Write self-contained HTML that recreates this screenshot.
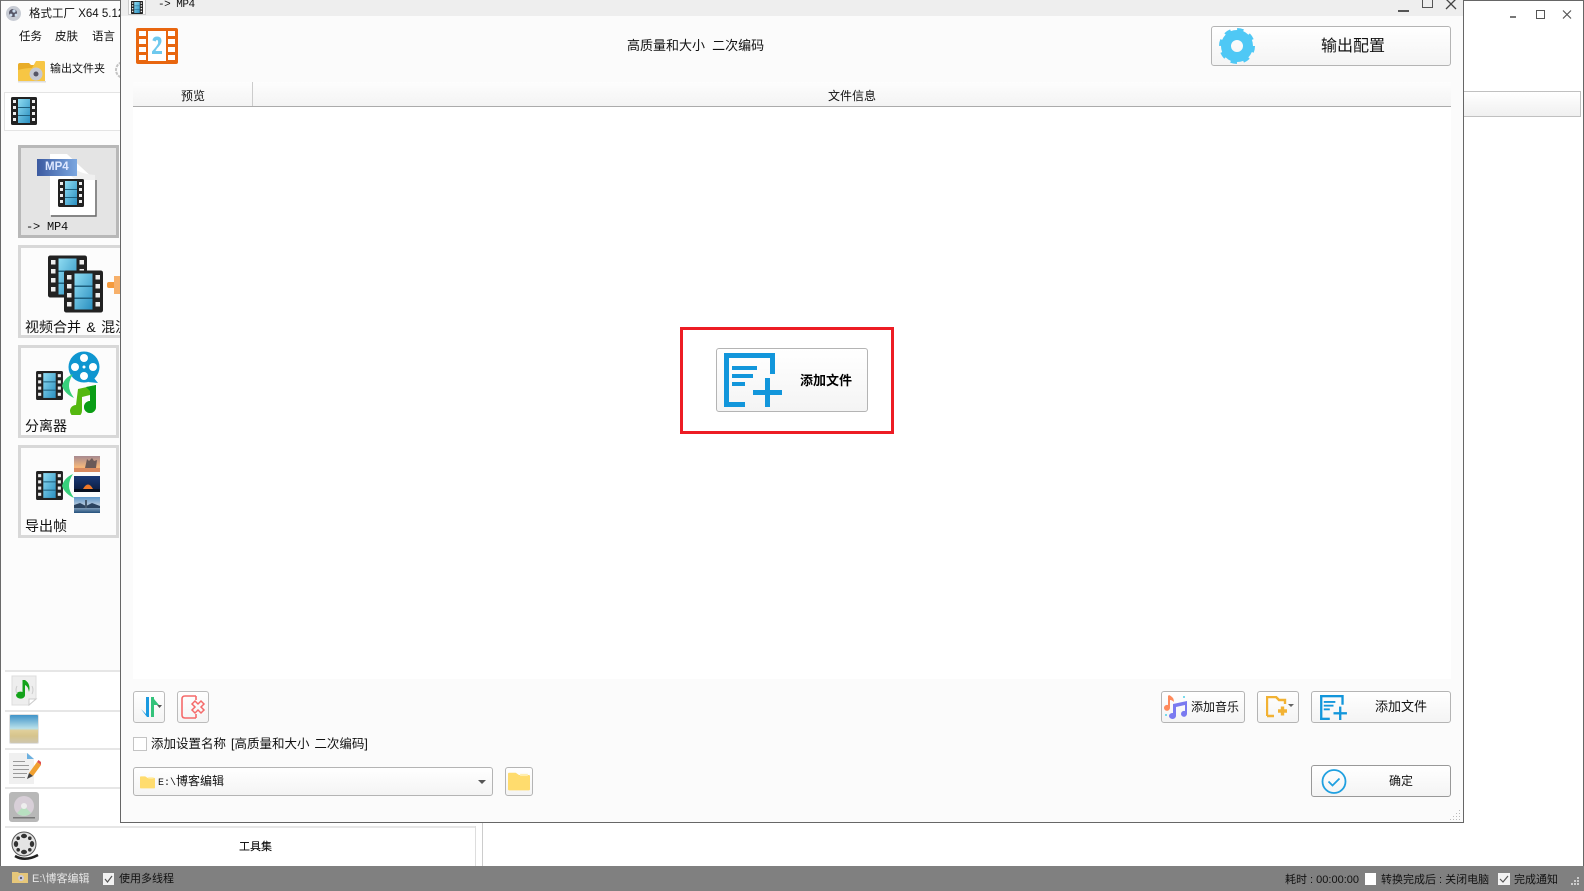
<!DOCTYPE html>
<html lang="zh"><head><meta charset="utf-8"><title>格式工厂</title>
<style>
html,body{margin:0;padding:0}
body{width:1584px;height:891px;position:relative;overflow:hidden;background:#fff;font-family:"Liberation Sans","WenQuanYi Zen Hei","Noto Sans CJK SC",sans-serif;font-size:12px;color:#111}
div,span,svg{position:absolute;box-sizing:border-box}
.t{white-space:nowrap;line-height:16px;height:16px}
.btn{border:1px solid #b4b4b4;border-radius:3px;background:linear-gradient(#fff,#f4f4f4)}
.card{left:18px;width:101px;height:93px;border:3px solid #d8d8d8;background:#fcfcfc}
.sep{left:5px;width:115px;height:2px;background:#e6e6e6}
</style></head>
<body>
<svg width="0" height="0" style="left:0;top:0">
<defs>
<linearGradient id="fb" x1="0" y1="0" x2="1" y2="1"><stop offset="0" stop-color="#8fdcf2"/><stop offset="1" stop-color="#2a8fc0"/></linearGradient>
<symbol id="film" viewBox="0 0 26 28">
<rect width="26" height="28" rx="1.5" fill="#222"/>
<g fill="#eee"><rect x="2" y="3" width="3" height="3"/><rect x="2" y="9" width="3" height="3"/><rect x="2" y="15" width="3" height="3"/><rect x="2" y="21" width="3" height="3"/><rect x="21" y="3" width="3" height="3"/><rect x="21" y="9" width="3" height="3"/><rect x="21" y="15" width="3" height="3"/><rect x="21" y="21" width="3" height="3"/></g>
<rect x="7" y="2" width="12" height="24" fill="url(#fb)"/>
<rect x="7" y="10" width="12" height="1" fill="#1d5f7e"/><rect x="7" y="18" width="12" height="1" fill="#1d5f7e"/>
</symbol>
<symbol id="addf" viewBox="0 0 58 54">
<g fill="#1296db"><rect x="0" y="0" width="50" height="5"/><rect x="0" y="0" width="5" height="54"/><rect x="0" y="49" width="21" height="5"/><rect x="46" y="0" width="5" height="21"/><rect x="8" y="13" width="25" height="4"/><rect x="8" y="21" width="21" height="4"/><rect x="8" y="29" width="13" height="4"/><rect x="29" y="37" width="29" height="5"/><rect x="41" y="25" width="5" height="29"/></g>
</symbol>
<symbol id="fold" viewBox="0 0 20 17">
<path d="M0 2 a1 1 0 0 1 1-1 H7 L10 3 H19 a1 1 0 0 1 1 1 V16 a1 1 0 0 1-1 1 H1 a1 1 0 0 1-1-1Z" fill="#ffdc6e"/>
<rect x="11" y="2" width="7" height="2" fill="#ffeeb0"/>
</symbol>
</defs>
</svg>

<!-- main window -->
<div style="left:0;top:0;width:1px;height:866px;background:#6a6a6a"></div>
<div style="left:1px;top:0;width:119px;height:866px;background:#fcfcfc"></div>
<div style="left:1px;top:0;width:119px;height:1px;background:#777"></div>
<div style="left:1px;top:670px;width:119px;height:196px;background:#fff"></div>
<svg style="left:5px;top:5px" width="17" height="17" viewBox="0 0 17 17"><circle cx="8.5" cy="8.5" r="7.5" fill="#c8ccd4"/><circle cx="8" cy="8" r="4" fill="#556"/><circle cx="9" cy="6" r="1.6" fill="#cde"/><circle cx="6" cy="10" r="1.4" fill="#cde"/><circle cx="11" cy="10" r="1.4" fill="#cde"/></svg>
<div style="left:2px;top:0;width:118px;height:30px;overflow:hidden"><span class="t" style="left:27px;top:6px;font-size:11.5px">格式工厂 X64 5.12</span></div>
<span class="t" style="left:19px;top:29px;font-size:11.5px">任务</span>
<span class="t" style="left:55px;top:29px;font-size:11.5px">皮肤</span>
<span class="t" style="left:92px;top:29px;font-size:11.5px">语言</span>
<svg style="left:17px;top:59px" width="29" height="24" viewBox="0 0 29 24"><path d="M1 6 Q1 4 3 4 H12 L14 6 H27 Q28 6 28 8 V22 H2 Q1 22 1 21Z" fill="#e9ad28"/><path d="M1 11 Q8 9 15 9 L19 2 H27 Q28 2 28 4 V22 H2 Q1 22 1 21Z" fill="#f7c644"/><circle cx="19" cy="15" r="6.5" fill="#c6c9d2"/><circle cx="19" cy="15" r="2.5" fill="#556"/><rect x="1" y="22" width="28" height="1.5" fill="#ddd"/></svg>
<span class="t" style="left:50px;top:61px;font-size:11px">输出文件夹</span>
<svg style="left:114px;top:60px" width="6" height="20" viewBox="0 0 6 20"><circle cx="10" cy="10" r="8" fill="none" stroke="#c4c4c4" stroke-width="2" stroke-dasharray="3 1"/></svg>
<div style="left:4px;top:92px;width:116px;height:39px;border:1px solid #e4e4e4;border-right:0;background:#fff"></div>
<svg style="left:11px;top:97px" width="26" height="28"><use href="#film"/></svg>

<!-- cards -->
<div class="card" style="top:145px;background:#e4e4e4;border-color:#b8b8b8"></div>
<svg style="left:37px;top:153px" width="60" height="64" viewBox="0 0 60 64"><path d="M13 1 H30 L58 27 V62 H13Z" fill="#fff"/><path d="M30 1 Q31 20 58 22 L58 27 H44 Q34 27 32 18 Z" fill="#f0f0f0"/><path d="M14 63 H59 V27" fill="none" stroke="#666" stroke-width="1.4"/></svg>
<div style="left:37px;top:159px;width:40px;height:17px;background:linear-gradient(90deg,#3c5aa0,#7ba7e0)"></div>
<span class="t" style="left:45px;top:159px;font-size:11.5px;font-weight:bold;color:#dfe8ff">MP4</span>
<svg style="left:58px;top:179px" width="26" height="28"><use href="#film"/></svg>
<span class="t" style="left:26px;top:219px;font-family:'Liberation Mono',monospace;font-size:12px;letter-spacing:-.2px">-&gt; MP4</span>

<div class="card" style="top:245px;width:102px;border-right:0"></div>
<svg style="left:48px;top:255px" width="39" height="43"><use href="#film"/></svg>
<svg style="left:64px;top:270px" width="39" height="43"><use href="#film"/></svg>
<svg style="left:107px;top:276px" width="13" height="18" viewBox="0 0 13 18"><rect x="0" y="6" width="13" height="6" rx="2" fill="#f59a3c"/><rect x="7" y="0" width="6" height="18" fill="#f7b06a"/></svg>
<div style="left:18px;top:316px;width:102px;height:20px;overflow:hidden"><span class="t" style="left:7px;top:3px;font-size:14px;word-spacing:1.5px">视频合并 &amp; 混流</span></div>

<div class="card" style="top:345px"></div>
<svg style="left:36px;top:371px" width="27" height="29"><use href="#film"/></svg>
<svg style="left:68px;top:351px" width="34" height="64" viewBox="0 0 34 64"><circle cx="16" cy="16" r="15.5" fill="#0f96d0"/><g fill="#fff"><circle cx="16" cy="7" r="4"/><circle cx="16" cy="25" r="4"/><circle cx="7" cy="16" r="4"/><circle cx="25" cy="16" r="4"/><circle cx="16" cy="16" r="1.5"/></g><path d="M20 31 L30 32 L26 27Z" fill="#0f96d0"/><path d="M10 38 L28 34 V56 A6 6 0 1 1 22 50 V44 L14 46 V60 A6 6 0 1 1 8 54 Z" fill="#55b810"/><path d="M18 36 L28 34 V56 A6 6 0 1 1 22 50 V40 Z" fill="#0a9d16"/></svg>
<svg style="left:61px;top:373px" width="14" height="26" viewBox="0 0 14 26"><path d="M12 1 Q3 5 1 13 Q4 21 13 25 Q8 18 8 13 Q8 7 12 1Z" fill="#37d07c"/></svg>
<span class="t" style="left:25px;top:418px;font-size:14px">分离器</span>

<div class="card" style="top:445px"></div>
<svg style="left:36px;top:471px" width="27" height="29"><use href="#film"/></svg>
<svg style="left:61px;top:473px" width="14" height="26" viewBox="0 0 14 26"><path d="M12 1 Q3 5 1 13 Q4 21 13 25 Q8 18 8 13 Q8 7 12 1Z" fill="#37d07c"/></svg>
<svg style="left:74px;top:456px" width="26" height="16" viewBox="0 0 26 16"><defs><linearGradient id="s1" x1="0" y1="0" x2="0" y2="1"><stop offset="0" stop-color="#a88a90"/><stop offset=".7" stop-color="#f6b87c"/><stop offset="1" stop-color="#e88c50"/></linearGradient></defs><rect width="26" height="16" fill="url(#s1)"/><path d="M11 12 L13 3 L15 5 L18 2 L20 5 L23 4 L22 12Z" fill="#6a5a58"/><rect y="12" width="26" height="4" fill="#d88a60"/></svg>
<svg style="left:74px;top:476px" width="26" height="16" viewBox="0 0 26 16"><defs><linearGradient id="s2" x1="0" y1="0" x2="0" y2="1"><stop offset="0" stop-color="#1a3a78"/><stop offset="1" stop-color="#0c1a3c"/></linearGradient></defs><rect width="26" height="16" fill="url(#s2)"/><path d="M9 13 Q14 4 19 13Z" fill="#f07828"/><rect y="13" width="26" height="3" fill="#081020"/></svg>
<svg style="left:74px;top:497px" width="26" height="16" viewBox="0 0 26 16"><defs><linearGradient id="s3" x1="0" y1="0" x2="0" y2="1"><stop offset="0" stop-color="#5e96c8"/><stop offset=".5" stop-color="#b4c8dc"/><stop offset="1" stop-color="#24507c"/></linearGradient></defs><rect width="26" height="16" fill="url(#s3)"/><path d="M0 8 L6 6 L12 9 L18 6 L26 9 V11 H0Z" fill="#2c4460"/><rect x="11" y="3" width="2" height="8" fill="#44586c"/></svg>
<span class="t" style="left:25px;top:518px;font-size:14px">导出帧</span>

<!-- lower list -->
<div class="sep" style="top:670px"></div>
<div class="sep" style="top:710px"></div>
<div class="sep" style="top:748px"></div>
<div class="sep" style="top:787px"></div>
<div class="sep" style="top:826px;width:470px"></div>
<svg style="left:11px;top:675px" width="27" height="31" viewBox="0 0 27 31"><path d="M1 1 H25 V24 L18 30 H1Z" fill="#eee" stroke="#ddd"/><path d="M25 24 H18 V30Z" fill="#fff" stroke="#ccc"/><path d="M14 5 V20 A4.5 3.5 0 1 1 11.5 17 V5 Z" fill="#13a31a"/><path d="M14 5 Q20 9 18 17 Q17 11 14 10Z" fill="#13a31a"/><path d="M6 11 Q4 15 6 19 M21 11 Q23 15 21 19" fill="none" stroke="#ccc"/></svg>
<div style="left:9px;top:714px;width:30px;height:30px;border-radius:2px;background:linear-gradient(#3f93c8,#b8e0ea 48%,#e0cf9a 55%,#d6c48c 75%,#cfc7b0);border:1px solid #e2e2e2"></div>
<svg style="left:8px;top:752px" width="33" height="33" viewBox="0 0 33 33"><path d="M1 1 H20 L26 7 V32 H1Z" fill="#f0f0f0"/><path d="M19 1 L26 7 H19Z" fill="#6bb0e0"/><g fill="#999"><rect x="5" y="9" width="12" height="1"/><rect x="5" y="13" width="16" height="1"/><rect x="5" y="17" width="16" height="1"/><rect x="5" y="21" width="14" height="1"/><rect x="5" y="25" width="12" height="1"/></g><path d="M21 21 L29 10 L33 13 L25 24 Z" fill="#f0a030"/><path d="M29 10 L30.5 8 L33 10 L33 13Z" fill="#e05050"/><path d="M21 21 L25 24 L19 27Z" fill="#444"/></svg>
<div style="left:9px;top:792px;width:30px;height:30px;border-radius:3px;background:#b8b8b8"></div>
<svg style="left:12px;top:795px" width="24" height="24" viewBox="0 0 24 24"><circle cx="12" cy="11" r="10" fill="#d8cfd8"/><path d="M12 11 L5 18 A10 10 0 0 0 19 18Z" fill="#b8e0c0"/><circle cx="12" cy="11" r="3" fill="#eee"/><rect x="1" y="22" width="22" height="1.5" fill="#777"/></svg>
<svg style="left:11px;top:831px" width="29" height="31" viewBox="0 0 29 31"><circle cx="13" cy="13" r="12" fill="#e4e4e4" stroke="#555" stroke-width="1"/><g fill="#333"><ellipse cx="13" cy="5" rx="3" ry="2.2"/><ellipse cx="13" cy="21" rx="3" ry="2.2"/><ellipse cx="5" cy="13" rx="2.2" ry="3"/><ellipse cx="21" cy="13" rx="2.2" ry="3"/><circle cx="7.2" cy="7.2" r="1.8"/><circle cx="18.8" cy="7.2" r="1.8"/><circle cx="7.2" cy="18.8" r="1.8"/><circle cx="18.8" cy="18.8" r="1.8"/></g><path d="M4 25 Q14 31 27 24" fill="none" stroke="#222" stroke-width="2.5"/></svg>
<span class="t" style="left:239px;top:839px;font-size:11px;text-shadow:0 0 0 #333">工具集</span>
<div style="left:475px;top:826px;width:1px;height:40px;background:#ddd"></div>
<div style="left:482px;top:822px;width:1px;height:44px;background:#ccc"></div>

<!-- right window -->
<div style="left:1463px;top:0;width:121px;height:866px;background:#fff;border-top:1px solid #666;border-right:1px solid #666"></div>
<div style="left:1510px;top:16px;width:6px;height:2px;background:#777"></div>
<div style="left:1536px;top:10px;width:9px;height:9px;border:1px solid #555"></div>
<svg style="left:1562px;top:10px" width="10" height="9"><path d="M1 .5 L9 8.5 M9 .5 L1 8.5" stroke="#555" stroke-width="1.2"/></svg>
<div style="left:1464px;top:91px;width:117px;height:26px;border:1px solid #c0c0c0;border-left:0;background:linear-gradient(#fff,#f0f0f0)"></div>

<!-- dialog -->
<div style="left:120px;top:0;width:1344px;height:823px;background:#fbfbfb;border-left:1px solid #666;border-right:1px solid #666;border-bottom:1px solid #666"></div>
<div style="left:121px;top:0;width:1342px;height:16px;background:#eee"></div>
<div style="left:128px;top:0;width:18px;height:15px;background:#fafafa;border:1px solid #ccc;border-top:0"></div>
<svg style="left:131px;top:1px" width="12" height="13"><use href="#film"/></svg>
<span class="t" style="left:158px;top:-3px;font-family:'Liberation Mono',monospace;font-size:11px;letter-spacing:-.5px">-&gt; MP4</span>
<div style="left:1398px;top:10px;width:11px;height:1.5px;background:#555"></div>
<div style="left:1422px;top:-1px;width:11px;height:9px;border:1.5px solid #555"></div>
<svg style="left:1445px;top:-1px" width="12" height="11"><path d="M1 0 L11 10 M11 0 L1 10" stroke="#444" stroke-width="1.3"/></svg>

<svg style="left:136px;top:28px" width="42" height="36" viewBox="0 0 42 36"><rect width="42" height="36" rx="2" fill="#e8660f"/><g fill="#fff"><rect x="3" y="3" width="7" height="5"/><rect x="3" y="11" width="7" height="5"/><rect x="3" y="19" width="7" height="5"/><rect x="3" y="27" width="7" height="5"/><rect x="32" y="3" width="7" height="5"/><rect x="32" y="11" width="7" height="5"/><rect x="32" y="19" width="7" height="5"/><rect x="32" y="27" width="7" height="5"/><rect x="12" y="3" width="18" height="30"/></g><path d="M16.5 12.5 Q17 8.5 21 8.5 Q25.5 8.5 25.5 13 Q25.5 16 21 20.5 L19.5 23 H26 V26 H16 V23.5 Q21 18 22 15.5 Q22.5 12 21 12 Q20 12 19.8 13.5 Z" fill="#6fc9ee"/></svg>
<span class="t" style="left:627px;top:38px;font-size:13px;word-spacing:3.5px">高质量和大小 二次编码</span>

<div class="btn" style="left:1211px;top:26px;width:240px;height:40px"></div>
<svg style="left:1217px;top:27px" width="40" height="38" viewBox="0 0 40 38"><circle cx="20" cy="19" r="11" fill="none" stroke="#4fc8f5" stroke-width="10"/><circle cx="20" cy="19" r="15.5" fill="none" stroke="#4fc8f5" stroke-width="5" stroke-dasharray="6 6.17"/></svg>
<span class="t" style="left:1321px;top:38px;font-size:16px;line-height:18px;height:18px">输出配置</span>

<div style="left:133px;top:82px;width:1318px;height:25px;background:linear-gradient(#fdfdfd,#f4f4f4);border-bottom:1px solid #ababab"></div>
<div style="left:252px;top:82px;width:1px;height:24px;background:#ccc"></div>
<span class="t" style="left:181px;top:87.5px">预览</span>
<span class="t" style="left:828px;top:87.5px">文件信息</span>
<div style="left:133px;top:107px;width:1318px;height:572px;background:#fff"></div>

<div style="left:680px;top:327px;width:214px;height:107px;border:3px solid #ed1c24"></div>
<div class="btn" style="left:716px;top:348px;width:152px;height:64px"></div>
<svg style="left:724px;top:353px" width="58" height="54"><use href="#addf"/></svg>
<span class="t" style="left:800px;top:373px;font-size:13px;font-weight:bold;color:#000">添加文件</span>

<div class="btn" style="left:133px;top:691px;width:32px;height:32px;border-color:#bbb"></div>
<svg style="left:140px;top:696px" width="22" height="22" viewBox="0 0 22 22"><path d="M1 13 L6 18 V1 H9 V21 H7 Z" fill="#1a9ae0"/><path d="M11 1 H14 V21 H11Z" fill="#33c27a"/><path d="M14 3 L19 9 H14Z" fill="#33c27a"/><path d="M17 9 H22 L19.5 12Z" fill="#555"/></svg>
<div class="btn" style="left:177px;top:691px;width:32px;height:32px;border-color:#bbb"></div>
<svg style="left:181px;top:695px" width="25" height="24" viewBox="0 0 25 24" fill="none" stroke="#f56a6a" stroke-width="1.6"><path d="M15 1 H4 Q1 1 1 4 V20 Q1 23 4 23 H15"/><path d="M15 1 V5 M15 19 V23"/><path d="M11 9 L14 6 L17 9 L20 6 L23 9 L20 12 L23 15 L20 18 L17 15 L14 18 L11 15 L14 12Z" stroke-width="1.5"/></svg>

<div style="left:133px;top:737px;width:14px;height:14px;background:#fff;border:1px solid #c4c4c4"></div>
<span class="t" style="left:151px;top:736px;font-size:12.5px;word-spacing:1.5px">添加设置名称 [高质量和大小 二次编码]</span>

<div class="btn" style="left:133px;top:767px;width:360px;height:29px"></div>
<svg style="left:140px;top:775px" width="15" height="14"><use href="#fold"/></svg>
<span class="t" style="left:158px;top:773px"><span style="position:static;font-family:'Liberation Mono',monospace;font-size:10px">E:\</span>博客编辑</span>
<div style="left:478px;top:780px;border-left:4px solid transparent;border-right:4px solid transparent;border-top:4px solid #555"></div>
<div class="btn" style="left:505px;top:767px;width:28px;height:29px"></div>
<svg style="left:508px;top:771px" width="22" height="20"><use href="#fold"/></svg>

<div class="btn" style="left:1161px;top:691px;width:84px;height:32px"></div>
<svg style="left:1164px;top:694px" width="26" height="26" viewBox="0 0 26 26"><path d="M4 2 L5 1 Q10 3 10 8 Q8 6 6 6 V14 A3 3 0 1 1 4 11Z" fill="#ff8a5c"/><path d="M9 10 L23 7 V20 A3 3 0 1 1 21 17 V11 L12 13 V22 A3.5 3 0 1 1 9 19Z" fill="#7a7af0"/><circle cx="20" cy="3" r="1" fill="#4fd0e8"/><circle cx="2" cy="21" r="1" fill="#4fd0e8"/></svg>
<span class="t" style="left:1191px;top:699px;">添加音乐</span>

<div class="btn" style="left:1257px;top:691px;width:42px;height:32px"></div>
<svg style="left:1266px;top:696px" width="28" height="22" viewBox="0 0 28 22"><path d="M1 20 V1 H10 L13 4 H19 V8 M1 20 H8" fill="none" stroke="#f2b233" stroke-width="2.4"/><path d="M12 15 H21 M16.5 10.5 V19.5" stroke="#f2b233" stroke-width="3.4"/><path d="M22 8 H28 L25 11Z" fill="#666"/></svg>

<div class="btn" style="left:1311px;top:691px;width:140px;height:32px"></div>
<svg style="left:1319px;top:695px" width="29" height="25"><use href="#addf"/></svg>
<span class="t" style="left:1375px;top:699px;font-size:13px">添加文件</span>

<div class="btn" style="left:1311px;top:765px;width:140px;height:32px;border-color:#999"></div>
<svg style="left:1321px;top:769px" width="26" height="25" viewBox="0 0 26 25" fill="none" stroke="#20a0e0"><circle cx="13" cy="12.5" r="11.5" stroke-width="1.8"/><path d="M7.5 12.5 L11.5 16.5 L18.5 9.5" stroke-width="1.8"/></svg>
<span class="t" style="left:1389px;top:773px;">确定</span>

<svg style="left:1450px;top:810px" width="12" height="11"><g fill="#bbb"><rect x="9" y="0" width="1" height="1"/><rect x="6" y="3" width="1" height="1"/><rect x="9" y="3" width="1" height="1"/><rect x="3" y="6" width="1" height="1"/><rect x="6" y="6" width="1" height="1"/><rect x="9" y="6" width="1" height="1"/><rect x="0" y="9" width="1" height="1"/><rect x="3" y="9" width="1" height="1"/><rect x="6" y="9" width="1" height="1"/><rect x="9" y="9" width="1" height="1"/></g></svg>

<!-- status bar -->
<div style="left:0;top:866px;width:1584px;height:25px;background:#808080"></div>
<svg style="left:12px;top:870px" width="16" height="14" viewBox="0 0 16 14"><path d="M0 2 H6 L7 3 H16 V13 H0Z" fill="#e6c77a"/><circle cx="9" cy="8" r="3" fill="#ccd"/><circle cx="9" cy="8" r="1.1" fill="#556"/></svg>
<span class="t" style="left:32px;top:871px;color:#e6e6e6;font-size:11px">E:\博客编辑</span>
<div style="left:103px;top:873px;width:11px;height:12px;background:#f2f2f2"></div>
<svg style="left:104px;top:875px" width="9" height="8" fill="none" stroke="#555"><path d="M1 4 L3.5 7 L8 1" stroke-width="1.2"/></svg>
<span class="t" style="left:119px;top:871px;font-size:11px;color:#111">使用多线程</span>
<span class="t" style="left:1285px;top:872px;font-size:11px">耗时 : 00:00:00</span>
<div style="left:1365px;top:873px;width:11px;height:12px;background:#fff"></div>
<span class="t" style="left:1381px;top:872px;font-size:11px">转换完成后 : 关闭电脑</span>
<div style="left:1498px;top:873px;width:12px;height:12px;background:#f2f2f2"></div>
<svg style="left:1499px;top:875px" width="10" height="8" fill="none" stroke="#555"><path d="M1 4 L4 7 L9 1" stroke-width="1.2"/></svg>
<span class="t" style="left:1514px;top:872px;font-size:11px">完成通知</span>
<svg style="left:1570px;top:876px" width="10" height="10"><g fill="#ccc"><rect x="7" y="1" width="2" height="2"/><rect x="4" y="4" width="2" height="2"/><rect x="7" y="4" width="2" height="2"/><rect x="1" y="7" width="2" height="2"/><rect x="4" y="7" width="2" height="2"/><rect x="7" y="7" width="2" height="2"/></g></svg>
</body></html>
